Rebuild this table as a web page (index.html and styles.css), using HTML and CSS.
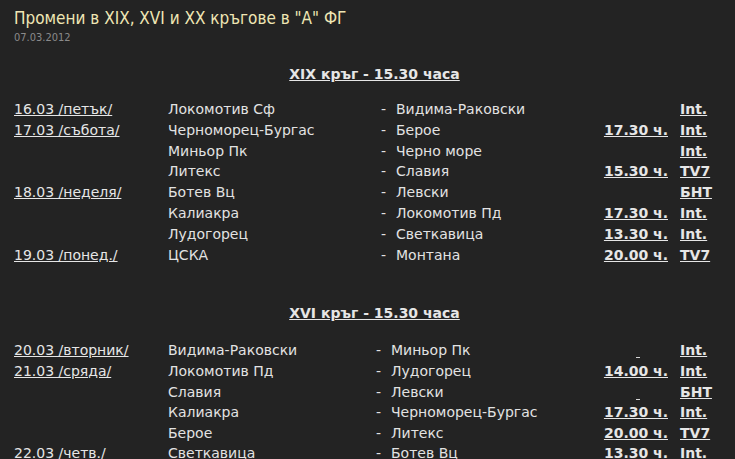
FILE: index.html
```html
<!DOCTYPE html>
<html lang="bg">
<head>
<meta charset="utf-8">
<link rel="stylesheet" href="styles.css">
</head>
<body>
<div class="page">
  <h1 class="title">Промени в XIX, XVI и XX кръгове в "А" ФГ</h1>
  <div class="date">07.03.2012</div>

  <h2 class="round"><a href="#">XIX кръг - 15.30 часа</a></h2>
  <table class="fixtures">
    <colgroup><col class="c-date"><col class="c-home"><col class="c-dash"><col class="c-away"><col class="c-time"><col class="c-tv"></colgroup>
    <tr><td><a href="#">16.03 /петък/</a></td><td>Локомотив Сф</td><td>-</td><td>Видима-Раковски</td><td class="time"></td><td class="tv"><a href="#">Int.</a></td></tr>
    <tr><td><a href="#">17.03 /събота/</a></td><td>Черноморец-Бургас</td><td>-</td><td>Берое</td><td class="time"><a href="#">17.30 ч.</a></td><td class="tv"><a href="#">Int.</a></td></tr>
    <tr><td></td><td>Миньор Пк</td><td>-</td><td>Черно море</td><td class="time"></td><td class="tv"><a href="#">Int.</a></td></tr>
    <tr><td></td><td>Литекс</td><td>-</td><td>Славия</td><td class="time"><a href="#">15.30 ч.</a></td><td class="tv"><a href="#">TV7</a></td></tr>
    <tr><td><a href="#">18.03 /неделя/</a></td><td>Ботев Вц</td><td>-</td><td>Левски</td><td class="time"></td><td class="tv"><a href="#">БНТ</a></td></tr>
    <tr><td></td><td>Калиакра</td><td>-</td><td>Локомотив Пд</td><td class="time"><a href="#">17.30 ч.</a></td><td class="tv"><a href="#">Int.</a></td></tr>
    <tr><td></td><td>Лудогорец</td><td>-</td><td>Светкавица</td><td class="time"><a href="#">13.30 ч.</a></td><td class="tv"><a href="#">Int.</a></td></tr>
    <tr><td><a href="#">19.03 /понед./</a></td><td>ЦСКА</td><td>-</td><td>Монтана</td><td class="time"><a href="#">20.00 ч.</a></td><td class="tv"><a href="#">TV7</a></td></tr>
  </table>

  <h2 class="round round2"><a href="#">XVI кръг - 15.30 часа</a></h2>
  <table class="fixtures second">
    <colgroup><col class="c-date"><col class="c-home2"><col class="c-dash"><col class="c-away2"><col class="c-time"><col class="c-tv"></colgroup>
    <tr><td><a href="#">20.03 /вторник/</a></td><td>Видима-Раковски</td><td>-</td><td>Миньор Пк</td><td class="time"><a href="#" class="empty"></a></td><td class="tv"><a href="#">Int.</a></td></tr>
    <tr><td><a href="#">21.03 /сряда/</a></td><td>Локомотив Пд</td><td>-</td><td>Лудогорец</td><td class="time"><a href="#">14.00 ч.</a></td><td class="tv"><a href="#">Int.</a></td></tr>
    <tr><td></td><td>Славия</td><td>-</td><td>Левски</td><td class="time"><a href="#" class="empty"></a></td><td class="tv"><a href="#">БНТ</a></td></tr>
    <tr><td></td><td>Калиакра</td><td>-</td><td>Черноморец-Бургас</td><td class="time"><a href="#">17.30 ч.</a></td><td class="tv"><a href="#">Int.</a></td></tr>
    <tr><td></td><td>Берое</td><td>-</td><td>Литекс</td><td class="time"><a href="#">20.00 ч.</a></td><td class="tv"><a href="#">TV7</a></td></tr>
    <tr><td><a href="#">22.03 /четв./</a></td><td>Светкавица</td><td>-</td><td>Ботев Вц</td><td class="time"><a href="#">13.30 ч.</a></td><td class="tv"><a href="#">Int.</a></td></tr>
  </table>
</div>
</body>
</html>
```

FILE: styles.css
```css
html, body {
  margin: 0;
  padding: 0;
  background: #232323;
  height: 100%;
  overflow: hidden;
}
.page {
  padding: 5px 0 0 14px;
  font-family: "DejaVu Sans", Verdana, sans-serif;
  color: #e2e2e2;
  width: 721px;
}
.title {
  margin: 0;
  font-size: 17px;
  font-weight: normal;
  font-stretch: condensed;
  color: #efe6b4;
  line-height: 26px;
}
.date {
  font-size: 11px;
  font-stretch: condensed;
  color: #8a8a8a;
  line-height: 14px;
}
a {
  color: #e6e6e6;
  text-decoration: underline;
}
.round {
  margin: 0;
  padding-top: 19px;
  text-align: center;
  font-size: 14px;
  font-weight: bold;
  line-height: 20px;
  width: 721px;
}
.round2 { padding-top: 38px; }
.fixtures {
  border-collapse: collapse;
  margin-top: 15px;
  font-size: 14px;
  table-layout: fixed;
  width: 707px;
}
.second { margin-top: 17px; }
.fixtures td {
  padding: 0;
  height: 20.8px;
  line-height: 20.8px;
  white-space: nowrap;
  vertical-align: middle;
  overflow: visible;
}
.second td { height: 20.6px; line-height: 20.6px; }
.c-date { width: 154px; }
.c-home { width: 213px; }
.c-dash { width: 15px; }
.c-away { width: 170px; }
.c-home2 { width: 208px; }
.c-away2 { width: 175px; }
.c-time { width: 114px; }
.c-tv { width: 41px; }
.time {
  text-align: right;
  font-weight: bold;
}
.time a { margin-right: 12px; }
.tv {
  font-weight: bold;
}
.empty {
  display: inline-block;
  width: 4px;
  height: 1px;
  background: #d8d8d8;
  vertical-align: -3px;
  margin-right: 40px !important;
}
```
